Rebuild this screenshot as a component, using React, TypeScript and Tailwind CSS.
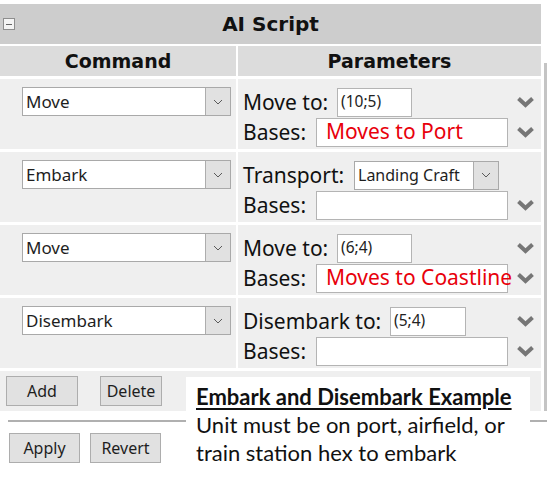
import React from "react";

const SmallChevron = () => (
  <svg width="10" height="6" viewBox="0 0 10 6">
    <polyline points="1,1 5,5 9,1" fill="none" stroke="#5a5a5a" strokeWidth="1" />
  </svg>
);

const BigChevron = () => (
  <svg width="19" height="12" viewBox="0 0 19 12">
    <polyline points="2.5,2.5 9.5,9 16.5,2.5" fill="none" stroke="#767676" strokeWidth="4" strokeLinejoin="miter" />
  </svg>
);

function Select({ value, w, size }: { value: string; w: string; size: string }) {
  return (
    <div className={`flex h-[29px] ${w} border border-[#a9a9a9] bg-white`}>
      <div className={`flex flex-1 items-center pl-[3px] ${size} text-[#1e1e1e] font-['Noto_Sans',sans-serif]`}>{value}</div>
      <div className="flex w-[25px] items-center justify-center border-l border-[#adadad] bg-[#e1e1e1]">
        <SmallChevron />
      </div>
    </div>
  );
}

type Row = {
  cmd: string;
  label: string;
  lw: string;
  kind: "input" | "select";
  value: string;
  iw: string;
  chev: boolean;
  bases: string;
};

const rows: Row[] = [
  { cmd: "Move", label: "Move to:", lw: "w-[94px]", kind: "input", value: "(10;5)", iw: "w-[75px]", chev: true, bases: "Moves to Port" },
  { cmd: "Embark", label: "Transport:", lw: "w-[111px]", kind: "select", value: "Landing Craft", iw: "w-[145px]", chev: false, bases: "" },
  { cmd: "Move", label: "Move to:", lw: "w-[94px]", kind: "input", value: "(6;4)", iw: "w-[75px]", chev: true, bases: "Moves to Coastline" },
  { cmd: "Disembark", label: "Disembark to:", lw: "w-[147px]", kind: "input", value: "(5;4)", iw: "w-[76px]", chev: true, bases: "" },
];

function ScriptRow({ r }: { r: Row }) {
  return (
    <div className="grid h-[70px] grid-cols-[236px_1fr] gap-x-[2px]">
      <div className="bg-[#efefef] pl-[22px] pt-[8px]">
        <Select value={r.cmd} w="w-[209px]" size="text-[17px]" />
      </div>
      <div className="flex flex-col bg-[#efefef] pl-[5px] pr-[6px] pt-[8px] text-[21px] text-[#111] font-['Noto_Sans',sans-serif]">
        <div className="flex h-[30px] items-center">
          <span className={`${r.lw} shrink-0 leading-none`}>{r.label}</span>
          {r.kind === "input" ? (
            <div className={`flex h-[29px] ${r.iw} items-center border border-[#b4b4b4] bg-white pl-[3px] text-[15.5px] text-[#222]`}>
              {r.value}
            </div>
          ) : (
            <Select value={r.value} w={r.iw} size="text-[16px]" />
          )}
          <div className="ml-auto flex w-[19px] items-center">{r.chev && <BigChevron />}</div>
        </div>
        <div className="flex h-[30px] items-center">
          <span className="w-[73px] shrink-0 leading-none">Bases:</span>
          <div className="flex h-[29px] w-[192px] items-center whitespace-nowrap border border-[#b4b4b4] bg-white pl-[9px] text-[21px] text-[#e8000b]">
            {r.bases}
          </div>
          <div className="ml-auto flex w-[19px] items-center">
            <BigChevron />
          </div>
        </div>
      </div>
    </div>
  );
}

const Btn = ({ children, w }: { children: React.ReactNode; w: string }) => (
  <div className={`flex h-[30px] ${w} items-center justify-center border border-[#adadad] bg-[#e1e1e1] text-[16px] text-[#1e1e1e] font-['Noto_Sans',sans-serif]`}>
    {children}
  </div>
);

export default function App() {
  return (
    <div className="relative h-[484px] w-[547px] overflow-hidden bg-white">
      <div className="flex pt-[4px]">
        <div className="flex w-[541px] flex-col">
          <div className="relative flex h-[40px] items-center justify-center bg-[#cdcdcd]">
            <div className="absolute left-[3px] top-[14px] flex h-[12px] w-[12px] items-center justify-center border border-[#8e8e8e] bg-[#f4f4f4]">
              <div className="h-[1px] w-[6px] bg-[#666]" />
            </div>
            <span className="text-[20px] font-bold text-[#111] font-['DejaVu_Sans',sans-serif]">AI Script</span>
          </div>
          <div className="mt-[2px] grid h-[30px] grid-cols-[236px_1fr] gap-x-[2px] text-[19px] font-bold text-[#111] font-['DejaVu_Sans',sans-serif]">
            <div className="flex items-center justify-center bg-[#dcdcdc]">Command</div>
            <div className="flex items-center justify-center bg-[#dcdcdc]">Parameters</div>
          </div>
          <div className="mt-[3px] flex flex-col gap-[3px]">
            {rows.map((r, i) => (
              <ScriptRow key={i} r={r} />
            ))}
            <div className="flex h-[40px] gap-[22px] bg-[#efefef] pl-[6px] pt-[5px]">
              <Btn w="w-[72px]">Add</Btn>
              <Btn w="w-[62px]">Delete</Btn>
            </div>
          </div>
        </div>
        <div className="ml-[3px] mt-[59px] h-[348px] w-[3px] bg-[#c4c4c4]" />
      </div>
      <div className="ml-[8px] mt-[9px] h-[2px] bg-[#b0b0b0]" />
      <div className="ml-[9px] mt-[11px] flex gap-[10px]">
        <Btn w="w-[71px]">Apply</Btn>
        <Btn w="w-[71px]">Revert</Btn>
      </div>
      <div className="absolute left-[186px] top-[377px] h-[107px] w-[344px] bg-white pl-[10px] pt-[6px] text-[22px] leading-[28px] text-[#111] font-['Lato',sans-serif]">
        <div className="font-bold underline decoration-[2px] underline-offset-[3px]">Embark and Disembark Example</div>
        <div>Unit must be on port, airfield, or</div>
        <div>train station hex to embark</div>
      </div>
    </div>
  );
}
